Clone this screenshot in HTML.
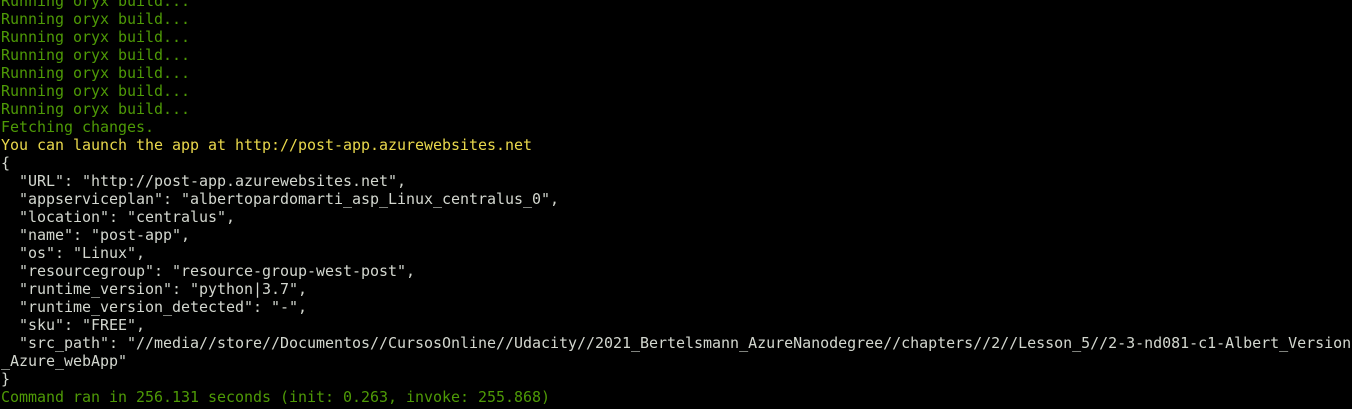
<!DOCTYPE html>
<html><head><style>
html,body{margin:0;padding:0;background:#000;width:1352px;height:409px;overflow:hidden}
pre{margin:0;position:absolute;top:-8px;left:1px;font-family:"DejaVu Sans Mono","Liberation Mono",monospace;font-size:15px;letter-spacing:-0.03px;line-height:18px;color:#d3d7cf;white-space:pre}
.g{color:#4e9a06}.y{color:#e9d84c}
</style></head><body><pre><span class="g">Running oryx build...
Running oryx build...
Running oryx build...
Running oryx build...
Running oryx build...
Running oryx build...
Running oryx build...
Fetching changes.</span>
<span class="y">You can launch the app at http://post-app.azurewebsites.net</span>
{
  "URL": "http://post-app.azurewebsites.net",
  "appserviceplan": "albertopardomarti_asp_Linux_centralus_0",
  "location": "centralus",
  "name": "post-app",
  "os": "Linux",
  "resourcegroup": "resource-group-west-post",
  "runtime_version": "python|3.7",
  "runtime_version_detected": "-",
  "sku": "FREE",
  "src_path": "//media//store//Documentos//CursosOnline//Udacity//2021_Bertelsmann_AzureNanodegree//chapters//2//Lesson_5//2-3-nd081-c1-Albert_Version
_Azure_webApp"
}
<span class="g">Command ran in 256.131 seconds (init: 0.263, invoke: 255.868)</span>
</pre></body></html>
